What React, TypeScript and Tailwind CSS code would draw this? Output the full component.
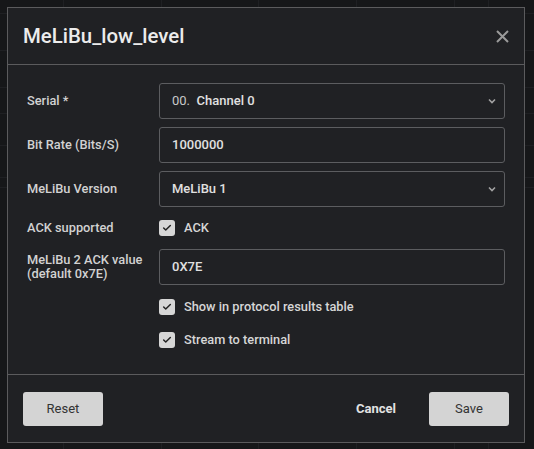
import { Check } from "lucide-react";

function Chevron() {
  return (
    <svg width="8" height="6" viewBox="0 0 8 6" className="text-[#a3a3a3]">
      <path d="M1 1.5 L4 4.5 L7 1.5" fill="none" stroke="currentColor" strokeWidth="1.6" />
    </svg>
  );
}

function Select({ children }: { children: React.ReactNode }) {
  return (
    <div className="h-9 flex items-center justify-between pl-[12px] pr-[8px] rounded-[3px] border border-[#5c5d60] text-[13px] font-medium text-[#e0e0e0]">
      <span>{children}</span>
      <Chevron />
    </div>
  );
}

function Input({ value }: { value: string }) {
  return (
    <div className="h-9 flex items-center pl-[12px] rounded-[3px] border border-[#5c5d60] text-[13px] font-medium text-[#e0e0e0]">
      {value}
    </div>
  );
}

function Box({ label }: { label: string }) {
  return (
    <div className="h-6 flex items-center gap-[9px]">
      <span className="w-4 h-4 rounded-[3px] bg-[#d6d6d6] flex items-center justify-center">
        <Check className="w-[10px] h-[10px] text-[#222]" strokeWidth={3.5} />
      </span>
      <span className="text-[12.8px] font-medium text-[#d6d6d6]">{label}</span>
    </div>
  );
}

export default function App() {
  const label = "text-[12.8px] font-medium text-[#d2d2d2] leading-[14px]";
  return (
    <div className="relative w-[534px] h-[449px] bg-[#161719] overflow-hidden p-[7px] pr-[9px]" style={{ fontFamily: "Roboto, sans-serif" }}>
      {/* faint table behind the overlay */}
      <div className="absolute inset-0 pointer-events-none">
        {[63, 161, 258, 356, 454, 488].map((x) => (
          <div key={x} className="absolute top-0 bottom-0 w-px bg-[#1f2023]" style={{ left: x }} />
        ))}
        {[13, 50, 87, 113, 145, 177, 187].map((y) => (
          <div key={y} className="absolute left-0 right-0 h-px bg-[#1f2023]" style={{ top: y }} />
        ))}
      </div>

      <div className="relative h-[436px] bg-[#202124] border border-[#5b5b5d] flex flex-col">
        <div className="h-[57px] shrink-0 flex items-center justify-between pl-[15px] pr-[15px] border-b border-[#5b5b5d]">
          <h1 className="text-[20.4px] font-medium text-[#ececec]">MeLiBu_low_level</h1>
          <svg width="13" height="13" viewBox="0 0 13 13" className="text-[#9a9a9a] mt-[1px]">
            <path d="M1 1 L12 12 M12 1 L1 12" stroke="currentColor" strokeWidth="2" />
          </svg>
        </div>

        <div className="flex-1 pt-[18px] pl-[19px] pr-[19px]">
          <div className="grid grid-cols-[132px_1fr] items-center gap-y-2">
            <span className={label}>Serial *</span>
            <Select>
              <span className="font-normal text-[#c8c8c8]">00.</span>&nbsp; Channel 0
            </Select>
            <span className={label}>Bit Rate (Bits/S)</span>
            <Input value="1000000" />
            <span className={label}>MeLiBu Version</span>
            <Select>MeLiBu 1</Select>
          </div>
          <div className="grid grid-cols-[132px_1fr] items-center mt-[9px]">
            <span className={label}>ACK supported</span>
            <Box label="ACK" />
          </div>
          <div className="grid grid-cols-[132px_1fr] items-center mt-[9px]">
            <span className={label}>
              MeLiBu 2 ACK value
              <br />
              (default 0x7E)
            </span>
            <Input value="0X7E" />
          </div>
          <div className="ml-[132px] mt-[10px] flex flex-col gap-[9px]">
            <Box label="Show in protocol results table" />
            <Box label="Stream to terminal" />
          </div>
        </div>

        <div className="h-[68px] shrink-0 border-t border-[#5b5b5d] flex items-center justify-between pl-[15px] pr-[15px] pt-px">
          <button className="w-20 h-[34px] rounded-[3px] bg-[#d4d4d4] text-[13px] font-normal text-[#333]">Reset</button>
          <div className="flex items-center gap-[33px]">
            <button className="text-[13px] font-bold text-[#e2e2e2]">Cancel</button>
            <button className="w-20 h-[34px] rounded-[3px] bg-[#d4d4d4] text-[13px] font-normal text-[#333]">Save</button>
          </div>
        </div>
      </div>
    </div>
  );
}
